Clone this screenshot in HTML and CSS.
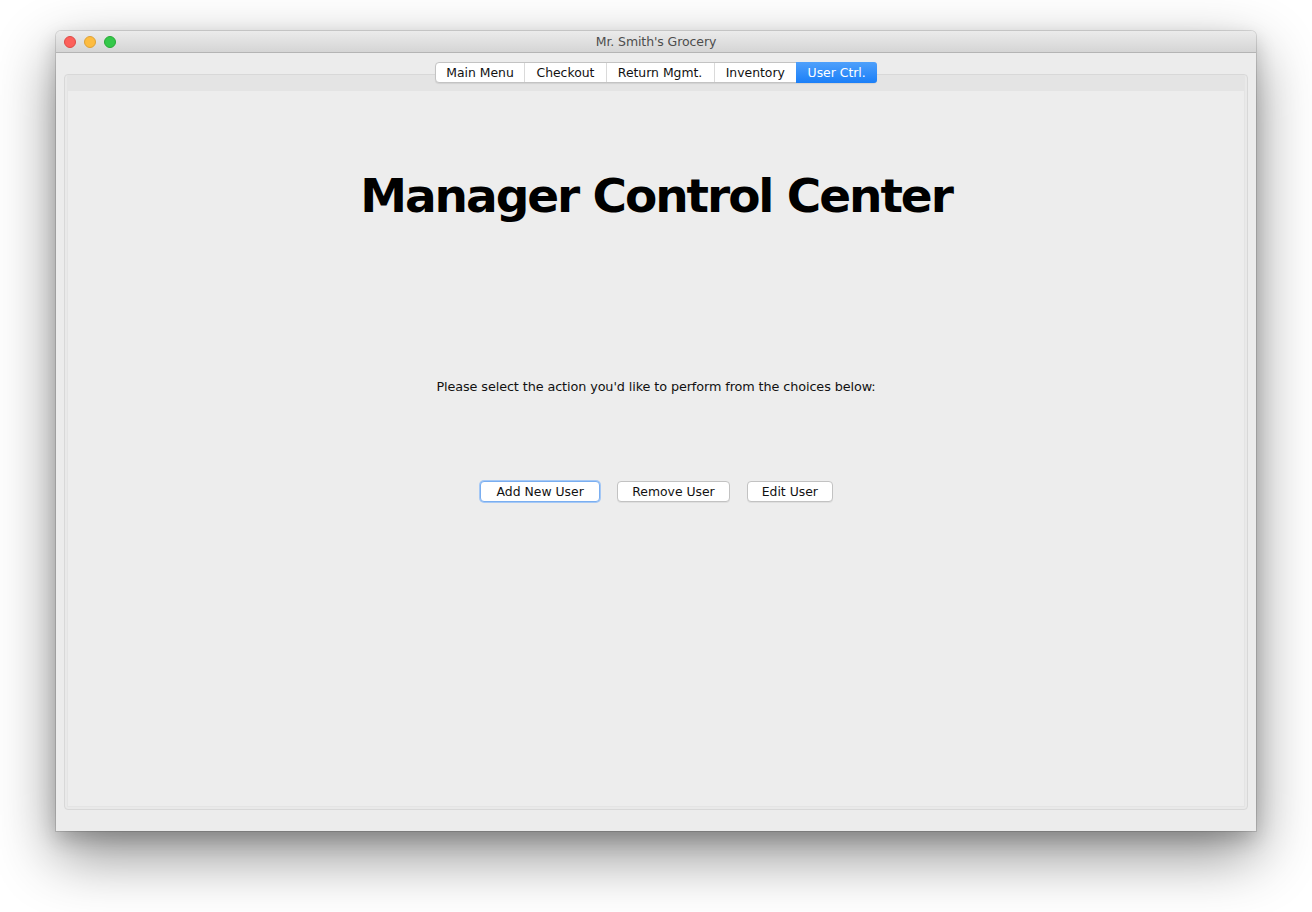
FILE: index.html
```html
<!DOCTYPE html>
<html>
<head>
<meta charset="utf-8">
<title>Mr. Smith's Grocery</title>
<link rel="stylesheet" href="styles.css">
</head>
<body>
<div class="window">
  <div class="titlebar">
    <div class="lights">
      <span class="light red"></span>
      <span class="light yellow"></span>
      <span class="light green"></span>
    </div>
    <div class="title">Mr. Smith's Grocery</div>
  </div>
  <div class="win-body">
    <div class="tabs">
      <div class="tab">Main Menu</div>
      <div class="tab">Checkout</div>
      <div class="tab">Return Mgmt.</div>
      <div class="tab">Inventory</div>
      <div class="tab active">User Ctrl.</div>
    </div>
    <div class="pane">
      <div class="pane-head"></div>
      <div class="pane-content">
        <h1 class="heading">Manager Control Center</h1>
        <p class="prompt">Please select the action you'd like to perform from the choices below:</p>
        <div class="actions">
          <button class="btn focused">Add New User</button>
          <button class="btn">Remove User</button>
          <button class="btn">Edit User</button>
        </div>
      </div>
    </div>
  </div>
</div>
</body>
</html>
```
FILE: styles.css
```css
html, body {
  margin: 0;
  padding: 0;
  background: #ffffff;
}
body {
  width: 1312px;
  height: 912px;
  overflow: hidden;
  padding: 31px 56px 0 56px;
  box-sizing: border-box;
  font-family: "DejaVu Sans", "Liberation Sans", sans-serif;
}
.window {
  width: 1200px;
  height: 800px;
  background: #ececec;
  border-radius: 5px 5px 0 0;
  box-shadow: 0 0 0 1px rgba(0,0,0,0.12), 0 24px 60px rgba(0,0,0,0.45), 0 8px 20px rgba(0,0,0,0.18);
  display: flex;
  flex-direction: column;
}
.titlebar {
  height: 22px;
  flex: none;
  position: relative;
  background: linear-gradient(#ebebeb, #d5d5d5);
  border-bottom: 1px solid #b4b4b4;
  border-radius: 5px 5px 0 0;
  box-sizing: border-box;
  display: flex;
  align-items: center;
  justify-content: center;
}
.lights {
  position: absolute;
  left: 8px;
  top: 5px;
  display: flex;
  gap: 8px;
}
.light {
  width: 12px;
  height: 12px;
  border-radius: 50%;
  box-sizing: border-box;
}
.light.red { background: #fc605b; border: 1px solid #de4a45; }
.light.yellow { background: #fdbc40; border: 1px solid #dea235; }
.light.green { background: #34c84a; border: 1px solid #27aa35; }
.title {
  font-size: 12.5px;
  color: #4d4d4d;
  letter-spacing: -0.1px;
}
.win-body {
  flex: 1;
  display: flex;
  flex-direction: column;
  padding: 9px 8px 21px 8px;
}
.tabs {
  display: flex;
  align-self: center;
  height: 21px;
  margin-bottom: -9px;
  position: relative;
  z-index: 1;
  border: 1px solid #c3c3c3;
  border-radius: 4px;
  background: #ffffff;
  box-sizing: border-box;
  box-shadow: 0 1px 1px rgba(0,0,0,0.08);
}
.tab {
  font-size: 12.4px;
  color: #111;
  height: 19px;
  line-height: 19px;
  padding: 0 11.2px;
  border-left: 1px solid #dadada;
}
.tab:first-child { border-left: none; border-radius: 3px 0 0 3px; padding: 0 10.5px; }
.tab.active {
  background: linear-gradient(#4fa0fb, #1a7ff8);
  color: #ffffff;
  border-left: none;
  border-radius: 0 3px 3px 0;
  margin: -1px -1px -1px 0;
  height: 21px;
  line-height: 21px;
  padding: 0 11.5px;
}
.pane {
  flex: 1;
  display: flex;
  flex-direction: column;
  border: 1px solid #d8d8d8;
  border-radius: 4px;
  background: #e9e9e9;
  padding: 0 2px 2px 2px;
}
.pane-head {
  height: 16px;
  flex: none;
  background: #e4e4e4;
}
.pane-content {
  flex: 1;
  background: #ededed;
  border: 1px solid #e4e4e4;
  border-top: none;
  display: flex;
  flex-direction: column;
  align-items: center;
}
.heading {
  margin: 77px 0 0 0;
  font-size: 47px;
  font-weight: bold;
  letter-spacing: -2.05px;
  color: #000;
  line-height: 56px;
}
.prompt {
  margin: 155px 0 0 0;
  font-size: 12.8px;
  color: #111;
  letter-spacing: -0.1px;
  line-height: 16px;
}
.actions {
  margin-top: 86px;
  display: flex;
  gap: 17px;
  margin-left: 1px;
}
.btn {
  font-family: "DejaVu Sans", "Liberation Sans", sans-serif;
  font-size: 12.4px;
  color: #111;
  background: #ffffff;
  border: 1px solid #c2c2c2;
  border-radius: 4px;
  height: 21px;
  padding: 0 14px;
  box-shadow: 0 1px 0 rgba(0,0,0,0.06);
}
.btn.focused {
  border-color: #7aaef0;
  box-shadow: 0 0 0 1px #a5c8f5;
  padding: 0 15.5px;
}
```
